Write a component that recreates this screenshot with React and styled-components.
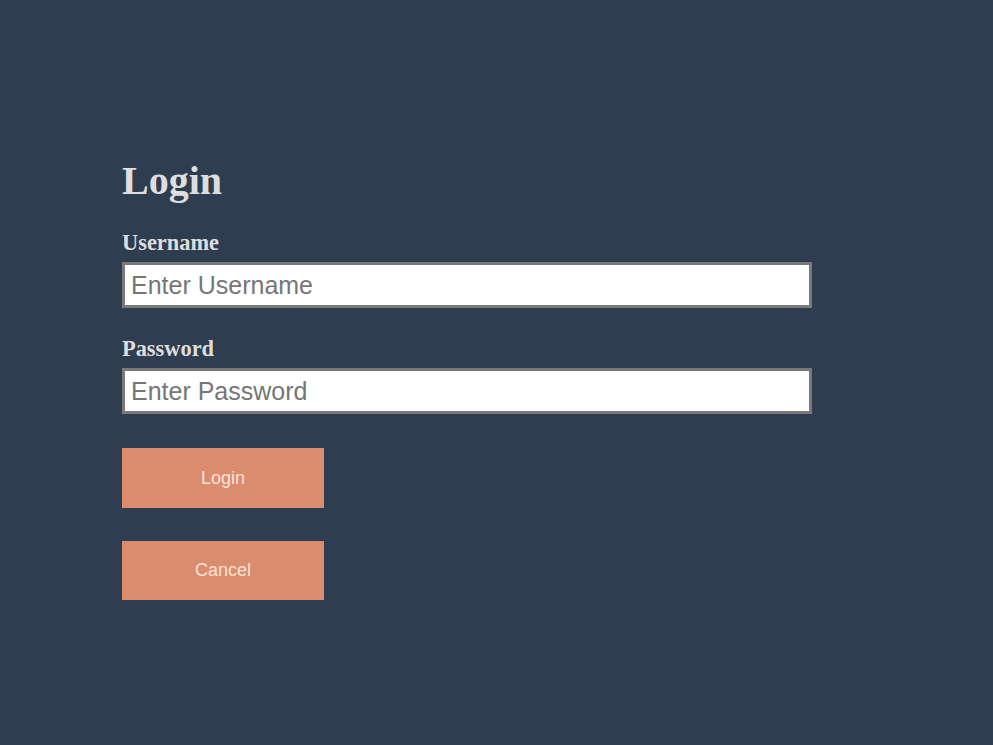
import React from "react";
import styled, { createGlobalStyle } from "styled-components";

const Global = createGlobalStyle`
  html, body { margin: 0; padding: 0; background: #2e3d50; }
  body { font-family: "Liberation Serif", "Times New Roman", serif; }
`;

const Page = styled.div`
  min-height: 745px;
  background: #2e3d50;
  padding: 158px 0 0 122px;
  box-sizing: border-box;
`;

const Form = styled.form`
  width: 690px;
  display: flex;
  flex-direction: column;
`;

const Title = styled.h1`
  margin: 0 0 26px;
  font-family: "Liberation Serif", "Times New Roman", serif;
  font-size: 40px;
  line-height: 46px;
  font-weight: bold;
  color: #dedede;
`;

const Label = styled.label`
  display: block;
  font-family: "Liberation Serif", "Times New Roman", serif;
  font-size: 22.4px;
  line-height: 26px;
  font-weight: bold;
  color: #dedede;
  margin-bottom: 6px;
`;

const Field = styled.div`
  display: flex;
  flex-direction: column;
  margin-bottom: ${(p) => p.$gap || 0}px;
`;

const Input = styled.input`
  box-sizing: border-box;
  width: 690px;
  height: 46px;
  padding: 5px 6px;
  border: 3px solid #7a7a7a;
  background: #ffffff;
  font-family: "Liberation Sans", Arial, sans-serif;
  font-size: 25px;
  color: #333;
  outline: none;
  &::placeholder { color: #767676; }
`;

const Button = styled.button`
  box-sizing: border-box;
  width: 202px;
  height: ${(p) => p.$h}px;
  margin-bottom: ${(p) => p.$mb}px;
  border: none;
  background: #db8b6e;
  color: #fbe3d4;
  font-family: "Liberation Sans", Arial, sans-serif;
  font-size: 18px;
  cursor: pointer;
  padding: 0;
`;

export default function App() {
  return (
    <>
      <Global />
      <Page>
        <Form onSubmit={(e) => e.preventDefault()}>
          <Title>Login</Title>
          <Field $gap={28}>
            <Label htmlFor="u">Username</Label>
            <Input id="u" type="text" placeholder="Enter Username" />
          </Field>
          <Field $gap={34}>
            <Label htmlFor="p">Password</Label>
            <Input id="p" type="password" placeholder="Enter Password" />
          </Field>
          <Button type="submit" $h={60} $mb={33}>Login</Button>
          <Button type="button" $h={59} $mb={0}>Cancel</Button>
        </Form>
      </Page>
    </>
  );
}
